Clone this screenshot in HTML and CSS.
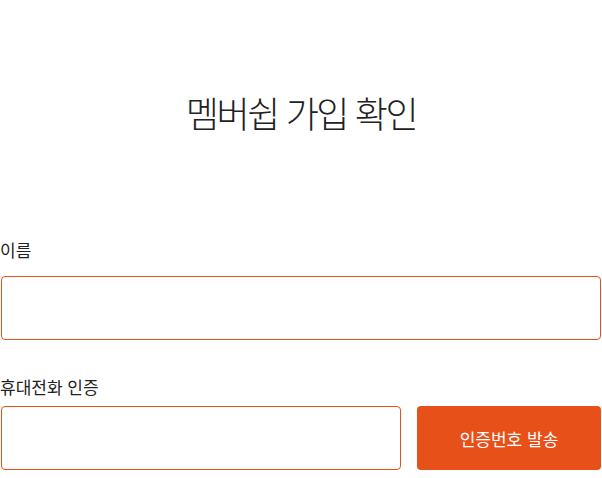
FILE: index.html
```html
<!DOCTYPE html>
<html lang="ko">
<head>
<meta charset="utf-8">
<link rel="stylesheet" href="styles.css">
</head>
<body>
<div class="page">
  <h1 class="title">멤버쉽 가입 확인</h1>
  <form class="form">
    <div class="field">
      <label class="label label--name">이름</label>
      <input class="input" type="text">
    </div>
    <div class="field field--phone">
      <label class="label label--phone">휴대전화 인증</label>
      <div class="row">
        <input class="input grow" type="text">
        <button class="btn" type="button">인증번호 발송</button>
      </div>
    </div>
  </form>
</div>
</body>
</html>
```
FILE: styles.css
```css
* { box-sizing: border-box; }
html, body { margin: 0; padding: 0; background: #fff; }
body { font-family: "Noto Sans CJK KR", "Noto Sans", sans-serif; color: #222; }
.page { padding: 0 1px; }
.title {
  margin: 0;
  padding-top: 87px;
  text-align: center;
  font-size: 36px;
  font-weight: 300;
  line-height: 50px;
  letter-spacing: -2.4px;
  color: #222;
}
.form { margin-top: 101px; display: flex; flex-direction: column; }
.field { display: flex; flex-direction: column; }
.field--phone { margin-top: 35px; }
.label {
  font-size: 17px;
  line-height: 24px;
  margin-left: -1px;
  color: #222;
}
.label--name { margin-bottom: 14px; }
.label--phone { margin-bottom: 7px; }
.input {
  display: block;
  width: 100%;
  height: 64px;
  border: 1px solid #e8501a;
  border-radius: 4px;
  background: #fff;
  outline: none;
  padding: 0 16px;
  font-size: 16px;
  font-family: inherit;
}
.row { display: flex; gap: 16px; }
.grow { flex: 1; width: auto; }
.btn {
  width: 184px;
  height: 64px;
  border: none;
  border-radius: 4px;
  background: #e8501a;
  color: #fff;
  font-family: inherit;
  font-size: 17px;
  font-weight: 400;
}
```
